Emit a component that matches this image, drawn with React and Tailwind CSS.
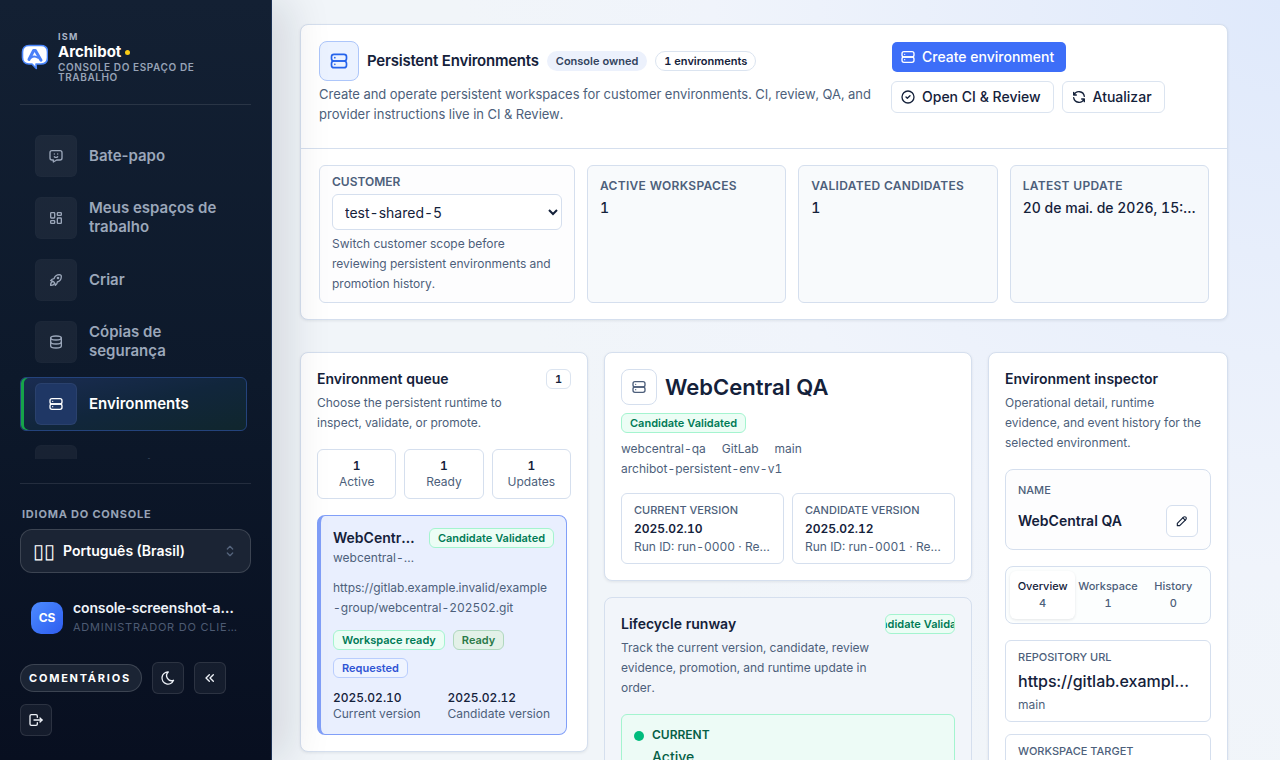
import {
  TbChevronsLeft,
  TbCircleCheck,
  TbDatabase,
  TbFolder,
  TbLayoutDashboard,
  TbLogout,
  TbMessageChatbot,
  TbMoon,
  TbPencil,
  TbRefresh,
  TbRocket,
  TbSelector,
  TbServer,
} from 'react-icons/tb';
import clsx from 'clsx';

const NAV = [
  { label: 'Bate-papo', icon: TbMessageChatbot },
  { label: 'Meus espaços de trabalho', icon: TbLayoutDashboard },
  { label: 'Criar', icon: TbRocket },
  { label: 'Cópias de segurança', icon: TbDatabase },
  { label: 'Environments', icon: TbServer, active: true },
  { label: 'Repositórios', icon: TbFolder },
];

const METRICS = [
  { label: 'Active workspaces', value: '1' },
  { label: 'Validated candidates', value: '1' },
  { label: 'Latest update', value: '20 de mai. de 2026, 15:42' },
];

const QUEUE_STATS = [
  { label: 'Active', value: 1 },
  { label: 'Ready', value: 1 },
  { label: 'Updates', value: 1 },
];

const VERSIONS = [
  { label: 'Current version', value: '2025.02.10', run: 'Run ID: run-0000 · Release ready' },
  { label: 'Candidate version', value: '2025.02.12', run: 'Run ID: run-0001 · Release ready' },
];

const TABS = [
  { label: 'Overview', count: 4, active: true },
  { label: 'Workspace', count: 1 },
  { label: 'History', count: 0 },
];

const TONES = {
  emerald: 'border-[#a4f4cf] bg-[#ecfdf5] text-[#007a55]',
  green: 'border-[#b0d8bf] bg-[#e3f1e8] text-[#2b7a48]',
  blue: 'border-[#b9cdfd] bg-[#eff4ff] text-[#2f55d4]',
  plain: 'border-[#dbe4f0] bg-white text-[#14213a]',
  soft: 'border-transparent bg-[#ecf1fc] text-[#33445e]',
};

function Badge({ tone = 'plain', pill = false, className, children }) {
  return (
    <span
      className={clsx(
        'inline-flex h-5 items-center justify-center overflow-hidden border px-2 text-[11px] font-semibold whitespace-nowrap',
        pill ? 'rounded-full' : 'rounded-md',
        TONES[tone],
        className
      )}
    >
      {children}
    </span>
  );
}

function Card({ className, children }) {
  return (
    <section className={clsx('rounded-lg border border-[#d5dfee] bg-white shadow-[0_1px_3px_rgba(15,23,42,0.08)]', className)}>
      {children}
    </section>
  );
}

function Logo() {
  return (
    <svg viewBox="0 0 28 28" className="size-7 shrink-0" aria-hidden="true">
      <path
        d="M9 2.500h12c4 0 6.500 2.500 6.500 6.500v5.500c0 4-2.500 6.500-6.500 6.500h-5l.3 4.500-4.300-4.500H9c-4 0-6.500-2.500-6.500-6.500V9c0-4 2.500-6.500 6.500-6.500z"
        fill="#fff"
        stroke="#4a86fb"
        strokeWidth="1.600"
        strokeLinejoin="round"
      />
      <path d="M9 16.500 13.600 7.500h1.800L21 17.200" fill="none" stroke="#4a80f8" strokeWidth="3" strokeLinecap="round" strokeLinejoin="round" />
      <path d="M11 14.600c2.200-1.600 4.600-1.500 7 .2" fill="none" stroke="#4a80f8" strokeWidth="2" strokeLinecap="round" />
    </svg>
  );
}

function IconButton({ label, icon: Icon }) {
  return (
    <button type="button" aria-label={label} className="flex size-8 items-center justify-center rounded-md border border-white/10 bg-white/5 text-[#eef2f8]">
      <Icon size={16} />
    </button>
  );
}

function Sidebar() {
  return (
    <aside className="relative z-10 flex h-full w-68 shrink-0 flex-col border-r border-[#1c3154] bg-linear-to-b from-[#132033] via-[#0d192b] to-[#080f20] px-5 pt-8 shadow-[18px_0_40px_rgba(15,23,42,0.12)]">
      <div className="flex items-center gap-2 border-b border-white/10 pb-[22px]">
        <Logo />
        <div className="flex flex-col pl-0.5">
          <span className="text-[9px] leading-[10px] font-bold tracking-[0.14em] text-[#a9b4c6]">ISM</span>
          <span className="flex items-center gap-1 text-[15px] leading-5 font-bold text-white">
            Archibot
            <span className="size-[5px] rounded-full bg-[#facc15]" />
          </span>
          <span className="text-[10px] leading-[10px] font-semibold tracking-[0.06em] text-[#97a3b6]">CONSOLE DO ESPAÇO DE TRABALHO</span>
        </div>
      </div>

      <nav className="mt-6 mr-1 mb-6 flex min-h-0 flex-1 flex-col gap-2 overflow-hidden">
        {NAV.map(({ label, icon: Icon, active }) => (
          <a
            key={label}
            href="#"
            className={clsx(
              'flex h-[54px] shrink-0 items-center gap-3 rounded-md border px-3.5 text-[15px] leading-[19px] font-semibold',
              active
                ? 'border-[#24437c] bg-linear-to-br from-[#1a2c52] via-[#11263c] to-[#10262d] text-white shadow-[inset_3px_0_0_#16a34a]'
                : 'border-transparent text-[#9ba7ba]'
            )}
          >
            <span
              className={clsx(
                'flex size-[42px] shrink-0 items-center justify-center rounded-md border',
                active ? 'border-white/5 bg-[#1f3765]' : 'border-white/[0.01] bg-white/5'
              )}
            >
              <Icon size={16} />
            </span>
            <span className="pb-0.5">{label}</span>
          </a>
        ))}
      </nav>

      <div className="flex flex-col border-t border-white/10 pt-[22px] pb-6">
        <span className="pl-0.5 text-[11px] leading-4 font-bold tracking-[0.07em] text-[#97a3b6]">IDIOMA DO CONSOLE</span>
        <button
          type="button"
          aria-label="Idioma do console"
          className="mt-[7px] flex h-11 items-center gap-2 rounded-xl border border-white/15 bg-[#1b2434] px-3 text-sm font-semibold text-white"
        >
          <span className="text-xl font-light">▯▯</span>
          Português (Brasil)
          <TbSelector size={16} className="ml-auto text-[#55647c]" />
        </button>

        <div className="mt-6 flex items-center gap-2.5 px-[11px]">
          <span className="flex size-8 shrink-0 items-center justify-center rounded-[10px] bg-linear-to-br from-[#4d8bff] to-[#2f5cf0] text-xs font-bold text-white">CS</span>
          <div className="min-w-0 pt-px pb-[3px]">
            <p className="truncate text-sm leading-5 font-semibold tracking-[-0.01em] text-[#eef2f8]">console-screenshot-admin</p>
            <p className="truncate text-[11px] leading-[18px] tracking-[0.07em] text-[#4d5b73]">ADMINISTRADOR DO CLIENTE</p>
          </div>
        </div>

        <div className="mt-[23px] flex flex-wrap items-center gap-2.5">
          <button type="button" className="h-7 rounded-full border border-white/15 bg-[#1b2434] pr-2.5 pl-2 text-[11px] font-bold tracking-[0.16em] text-white">
            COMENTÁRIOS
          </button>
          <IconButton label="Tema escuro" icon={TbMoon} />
          <IconButton label="Recolher menu" icon={TbChevronsLeft} />
          <IconButton label="Sair" icon={TbLogout} />
        </div>
      </div>
    </aside>
  );
}

function HeaderCard() {
  const outline = 'flex h-8 items-center gap-1.5 rounded-md border border-[#dbe4f0] bg-white pr-3 pl-2 text-sm font-medium text-[#14213a]';

  return (
    <Card>
      <div className="flex gap-3.5 border-b border-[#d5dfee] px-[18px] pt-4 pb-6">
        <div className="w-[558px] min-w-0">
          <div className="flex items-center gap-2">
            <span className="flex size-10 shrink-0 items-center justify-center rounded-lg border border-[#adc6fa] bg-[#ebf2ff] text-[#2563eb]">
              <TbServer size={20} />
            </span>
            <h1 className="text-[15px] leading-6 font-semibold tracking-[-0.015em] text-[#14213a]">Persistent Environments</h1>
            <Badge tone="soft" pill>
              Console owned
            </Badge>
            <Badge pill>1 environments</Badge>
          </div>
          <p className="mt-[3px] text-[13px] leading-5 text-[#4d5f7b]">
            Create and operate persistent workspaces for customer environments. CI, review, QA, and provider instructions live in CI &amp; Review.
          </p>
        </div>
        <div className="flex flex-1 flex-wrap content-start gap-2">
          <div className="w-full">
            <button type="button" className="flex h-8 items-center gap-1.5 rounded-md border border-transparent bg-[#3d6ef8] bg-clip-padding pr-3 pl-2 text-sm font-medium text-white">
              <TbServer size={16} />
              Create environment
            </button>
          </div>
          <button type="button" className={outline}>
            <TbCircleCheck size={16} />
            Open CI &amp; Review
          </button>
          <button type="button" className={outline}>
            <TbRefresh size={16} />
            Atualizar
          </button>
        </div>
      </div>

      <div className="grid grid-cols-[256px_repeat(3,minmax(0,1fr))] gap-3 px-[18px] py-4">
        <div className="flex flex-col gap-1 rounded-md border border-[#d5dfee] bg-[#fdfdfe] px-3 py-2">
          <label htmlFor="customer" className="text-xs leading-4 font-semibold text-[#4d5f7b] uppercase">
            Customer
          </label>
          <select id="customer" className="h-9 w-full rounded-md border border-[#d5dfee] bg-white px-2 text-sm text-[#14213a]">
            <option>test-shared-5</option>
          </select>
          <p className="text-xs leading-5 text-[#4d5f7b]">Switch customer scope before reviewing persistent environments and promotion history.</p>
        </div>
        {METRICS.map((m) => (
          <div key={m.label} className="flex flex-col gap-1 rounded-md border border-[#d5dfee] bg-[#f8fafc] p-3">
            <span className="text-xs leading-4 font-semibold tracking-wide text-[#4d5f7b] uppercase">{m.label}</span>
            <span className="truncate text-sm font-medium text-[#14213a]">{m.value}</span>
          </div>
        ))}
      </div>
    </Card>
  );
}

function QueueCard() {
  return (
    <Card className="p-4">
      <div className="flex items-start justify-between">
        <h2 className="text-sm font-semibold text-[#14213a]">Environment queue</h2>
        <Badge>1</Badge>
      </div>
      <p className="mt-1 max-w-[210px] text-xs leading-5 text-[#4d5f7b]">Choose the persistent runtime to inspect, validate, or promote.</p>

      <div className="mt-4 grid grid-cols-3 gap-2">
        {QUEUE_STATS.map((s) => (
          <div key={s.label} className="rounded-md border border-[#d5dfee] py-2 text-center text-xs">
            <div className="font-semibold text-[#14213a]">{s.value}</div>
            <div className="text-[#4d5f7b]">{s.label}</div>
          </div>
        ))}
      </div>

      <button type="button" className="mt-4 mr-1 block w-[calc(100%-4px)] rounded-lg border border-l-4 border-[#819ff8] bg-[#e9effe] p-3 text-left text-xs text-[#4d5f7b]">
        <span className="flex items-start gap-3">
          <span className="min-w-0 flex-1">
            <span className="block truncate text-sm font-semibold text-[#14213a]">WebCentral QA</span>
            <span className="mt-0.5 block truncate">webcentral-qa</span>
          </span>
          <Badge tone="emerald" className="shrink-0">
            Candidate Validated
          </Badge>
        </span>
        <span className="mt-3 block leading-5 break-all">https://gitlab.example.invalid/example-group/webcentral-202502.git</span>
        <span className="mt-3 flex flex-wrap gap-2">
          <Badge tone="emerald">Workspace ready</Badge>
          <Badge tone="green">Ready</Badge>
          <Badge tone="blue">Requested</Badge>
        </span>
        <span className="mt-3 grid grid-cols-2 gap-2">
          {VERSIONS.map((v) => (
            <span key={v.label} className="block whitespace-nowrap">
              <span className="block font-medium text-[#14213a]">{v.value}</span>
              {v.label}
            </span>
          ))}
        </span>
      </button>
    </Card>
  );
}

function RuntimeCard() {
  return (
    <Card className="p-4">
      <div className="flex items-center gap-2">
        <span className="flex size-9 shrink-0 items-center justify-center rounded-lg border border-[#d5dfee] text-[#4d5f7b]">
          <TbServer size={16} />
        </span>
        <h2 className="text-[22px] leading-8 font-semibold text-[#14213a]">WebCentral QA</h2>
      </div>
      <div className="mt-2 flex">
        <Badge tone="emerald">Candidate Validated</Badge>
      </div>
      <div className="mt-1.5 flex flex-wrap gap-x-4 text-xs leading-5 text-[#4d5f7b]">
        <span>webcentral-qa</span>
        <span>GitLab</span>
        <span>main</span>
        <span className="w-full">archibot-persistent-env-v1</span>
      </div>
      <div className="mt-3.5 grid grid-cols-2 gap-2">
        {VERSIONS.map((v) => (
          <div key={v.label} className="flex min-w-0 flex-col gap-0.5 rounded-md border border-[#d5dfee] px-3 py-2 text-xs text-[#4d5f7b]">
            <span className="text-[11px] leading-[17px] font-medium uppercase">{v.label}</span>
            <span className="font-semibold text-[#14213a]">{v.value}</span>
            <span className="truncate">{v.run}</span>
          </div>
        ))}
      </div>
    </Card>
  );
}

function RunwayCard() {
  return (
    <section className="rounded-lg border border-[#d5dfee] bg-[#f2f5fa] p-4">
      <div className="flex items-start gap-3">
        <div className="min-w-0 flex-1">
          <h2 className="text-sm font-semibold text-[#14213a]">Lifecycle runway</h2>
          <p className="mt-1 text-xs leading-5 text-[#4d5f7b]">Track the current version, candidate, review evidence, promotion, and runtime update in order.</p>
        </div>
        <Badge tone="emerald" className="w-[70px] shrink-0">
          Candidate Validated
        </Badge>
      </div>
      <div className="mt-4 flex gap-2 rounded-md border border-[#a4f4cf] bg-[#edfbf6] p-3 text-[#065f46]">
        <span className="mt-1 size-2.5 shrink-0 rounded-full bg-[#00bc7d]" />
        <div>
          <div className="text-xs font-semibold">CURRENT</div>
          <div className="mt-1 text-sm font-medium">Active</div>
          <div className="mt-1 text-xs">2025.02.10</div>
        </div>
      </div>
    </section>
  );
}

function InspectorCard() {
  const box = 'rounded-md border border-[#d5dfee] px-3 py-2';
  const label = 'text-[11px] leading-4 font-medium text-[#4d5f7b] uppercase';

  return (
    <Card className="p-4">
      <h2 className="text-sm font-semibold text-[#14213a]">Environment inspector</h2>
      <p className="mt-1 text-xs leading-5 text-[#4d5f7b]">Operational detail, runtime evidence, and event history for the selected environment.</p>

      <div className="mt-4 rounded-lg border border-[#d5dfee] bg-[#fdfdfe] p-3">
        <div className={label}>Name</div>
        <div className="mt-[7px] flex items-center justify-between">
          <span className="text-sm font-semibold text-[#14213a]">WebCentral QA</span>
          <button type="button" aria-label="Rename environment" className="flex size-8 items-center justify-center rounded-md border border-[#d5dfee] bg-white text-[#14213a]">
            <TbPencil size={14} />
          </button>
        </div>
      </div>

      <div role="tablist" className="mt-4 grid grid-cols-3 rounded-lg border border-[#d5dfee] bg-[#fcfefe] p-1">
        {TABS.map((t) => (
          <button
            key={t.label}
            type="button"
            role="tab"
            aria-selected={Boolean(t.active)}
            className={clsx(
              'flex h-12 flex-col items-center justify-center rounded-md text-[11px] leading-[17px] font-medium text-[#4d5f7b]',
              t.active && 'bg-white shadow-[0_1px_3px_rgba(15,23,42,0.1)]'
            )}
          >
            <span className={clsx(t.active && 'text-[#14213a]')}>{t.label}</span>
            <span>{t.count}</span>
          </button>
        ))}
      </div>

      <div className={clsx(box, 'mt-4')}>
        <div className={label}>Repository URL</div>
        <div className="mt-1 truncate text-base font-medium text-[#14213a]">https://gitlab.example.invalid/example-group</div>
        <div className="mt-1 text-xs text-[#4d5f7b]">main</div>
      </div>
      <div className={clsx(box, 'mt-3')}>
        <div className={label}>Workspace target</div>
        <div className="mt-1 truncate text-base font-medium text-[#14213a]">webcentral-qa</div>
        <div className="mt-1 text-xs text-[#4d5f7b]">persistent</div>
      </div>
    </Card>
  );
}

export default function App() {
  return (
    <div className="flex h-screen overflow-hidden bg-[#f1f5f9] font-[Inter,'Liberation_Sans',sans-serif] antialiased">
      <Sidebar />
      <main className="h-full min-w-0 flex-1 overflow-y-auto bg-[radial-gradient(circle_at_100%_0%,#dfe9fb_0%,#e7eefb_20%,#f0f4fb_45%,#f1f5f9_65%)] pt-6 pr-[52px] pl-7 tabular-nums [scrollbar-width:none]">
        <HeaderCard />
        <div className="mt-8 grid grid-cols-[288px_minmax(0,1fr)_240px] items-start gap-4 pb-8">
          <QueueCard />
          <div className="flex flex-col gap-4">
            <RuntimeCard />
            <RunwayCard />
          </div>
          <InspectorCard />
        </div>
      </main>
    </div>
  );
}
